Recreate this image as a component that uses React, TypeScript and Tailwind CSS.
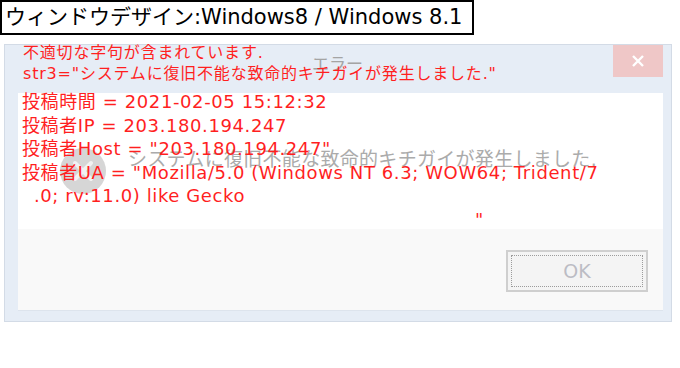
import React from 'react'

const font = "font-['DejaVu_Sans','Noto_Sans_CJK_JP',sans-serif]"

function ErrorIcon() {
    return (
        <svg width="48" height="48" viewBox="0 0 48 48">
            <circle cx="24" cy="24" r="23" fill="#cccccc" />
            <path d="M16 16 L32 32 M32 16 L16 32" stroke="#f0f0f0" strokeWidth="4" strokeLinecap="round" />
        </svg>
    )
}

export default function App() {
    return (
        <div className={`w-[680px] h-[368px] bg-white overflow-hidden ${font}`}>
            {/* caption */}
            <div className="inline-flex items-center h-[35px] w-[474px] border-2 border-black pl-[3px] text-[21px] leading-none text-black whitespace-nowrap">
                ウィンドウデザイン:Windows8 / Windows 8.1
            </div>

            {/* dialog */}
            <div className="relative mt-[9px] ml-[4px] w-[668px] h-[278px] bg-[#e6edf6] border border-[#d3dbe6] flex flex-col">
                <div className="h-[48px] flex items-start shrink-0">
                    <div className="relative z-20 ml-[18px] -mt-[3px] text-[16px] leading-[21px] tracking-[0.8px] text-[#ff1f1f] whitespace-nowrap">
                        <div>不適切な字句が含まれています.</div>
                        <div>str3="システムに復旧不能な致命的キチガイが発生しました."</div>
                    </div>
                    <button className="ml-auto mr-[8px] w-[50px] h-[32px] bg-[#efc7c7] flex items-center justify-center">
                        <svg width="14" height="12" viewBox="0 0 14 12">
                            <path d="M2 1 L12 11 M12 1 L2 11" stroke="#ffffff" strokeWidth="2.4" />
                        </svg>
                    </button>
                </div>

                <div className="ml-[13px] mr-[8px] h-[136px] bg-white shrink-0">
                    <div className="relative z-20 -mt-[3px] pl-[4px] text-[18px] leading-[23.5px] tracking-[0.6px] text-[#ff1f1f] whitespace-nowrap">
                        <div>投稿時間 = 2021-02-05 15:12:32</div>
                        <div>投稿者IP = 203.180.194.247</div>
                        <div>投稿者Host = "203.180.194.247"</div>
                        <div>投稿者UA = "Mozilla/5.0 (Windows NT 6.3; WOW64; Trident/7</div>
                        <div className="pl-[12px]">.0; rv:11.0) like Gecko</div>
                        <div className="pl-[453px]">"</div>
                    </div>
                </div>

                <div className="ml-[13px] mr-[8px] h-[82px] bg-[#f9f9f9] border-b border-[#dde4ed] flex justify-end shrink-0">
                    <button className="mt-[21px] mr-[15px] w-[142px] h-[42px] border-2 border-[#cfcfcf] bg-[#f4f4f4] p-[3px]">
                        <div className="w-full h-full border border-dotted border-[#9c9c9c] flex items-center justify-center text-[19px] leading-none text-[#bcbcc4]">
                            OK
                        </div>
                    </button>
                </div>

                {/* faded original dialog content showing through, under the red text */}
                <div className="absolute z-10 left-[307px] top-[11px] text-[17px] leading-[17px] text-[#a4a4a4] pointer-events-none">
                    エラー
                </div>
                <div className="absolute z-10 left-[54px] top-[102px] opacity-80 pointer-events-none">
                    <ErrorIcon />
                </div>
                <div className="absolute z-10 left-[123px] top-[102px] text-[19px] leading-[24px] tracking-[0.3px] text-[#ababab] whitespace-nowrap pointer-events-none">
                    システムに復旧不能な致命的キチガイが発生しました.
                </div>
            </div>
        </div>
    )
}
